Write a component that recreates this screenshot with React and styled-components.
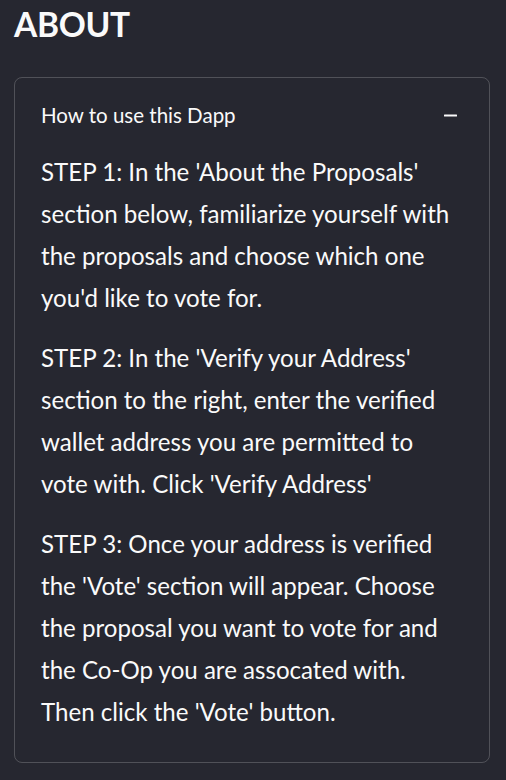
import React from 'react';
import styled, { createGlobalStyle } from 'styled-components';

const GlobalStyle = createGlobalStyle`
    html, body {
        margin: 0;
        padding: 0;
        background: #262730;
    }
    body {
        font-family: Lato, "Noto Sans", sans-serif;
        color: #fafafa;
    }
`;

const steps = [
    "STEP 1: In the 'About the Proposals' section below, familiarize yourself with the proposals and choose which one you'd like to vote for.",
    "STEP 2: In the 'Verify your Address' section to the right, enter the verified wallet address you are permitted to vote with. Click 'Verify Address'",
    "STEP 3: Once your address is verified the 'Vote' section will appear. Choose the proposal you want to vote for and the Co-Op you are assocated with. Then click the 'Vote' button.",
];

const MinusIcon = () => (
    <svg width="13" height="14" viewBox="0 0 13 14">
        <rect x="0" y="6.5" width="13" height="2" rx="0.5" fill="#fafafa" />
    </svg>
);

const App = () => {
    return (
        <Page>
            <GlobalStyle />
            <Title>ABOUT</Title>
            <Expander>
                <Header>
                    <HeaderText>How to use this Dapp</HeaderText>
                    <MinusIcon />
                </Header>
                <Body>
                    {steps.map((s, i) => (
                        <Step key={i}>{s}</Step>
                    ))}
                </Body>
            </Expander>
        </Page>
    );
};

const Page = styled.div`
    width: 506px;
    height: 780px;
    box-sizing: border-box;
    padding: 0 16px 0 14px;
    overflow: hidden;
`;

const Title = styled.h1`
    margin: 0;
    height: 77px;
    padding-top: 2px;
    box-sizing: border-box;
    font-size: 33.5px;
    font-weight: 700;
    line-height: 44px;
    letter-spacing: -0.3px;
`;

const Expander = styled.div`
    border: 1px solid rgba(250, 250, 250, 0.2);
    border-radius: 8px;
`;

const Header = styled.div`
    display: flex;
    align-items: center;
    justify-content: space-between;
    height: 73px;
    padding: 0 32px 0 26px;
`;

const HeaderText = styled.span`
    font-size: 20.5px;
`;

const Body = styled.div`
    padding: 0 25px 11px 26px;
`;

const Step = styled.p`
    margin: 0 0 18px;
    font-size: 24.1px;
    line-height: 42px;
`;

export default App;
